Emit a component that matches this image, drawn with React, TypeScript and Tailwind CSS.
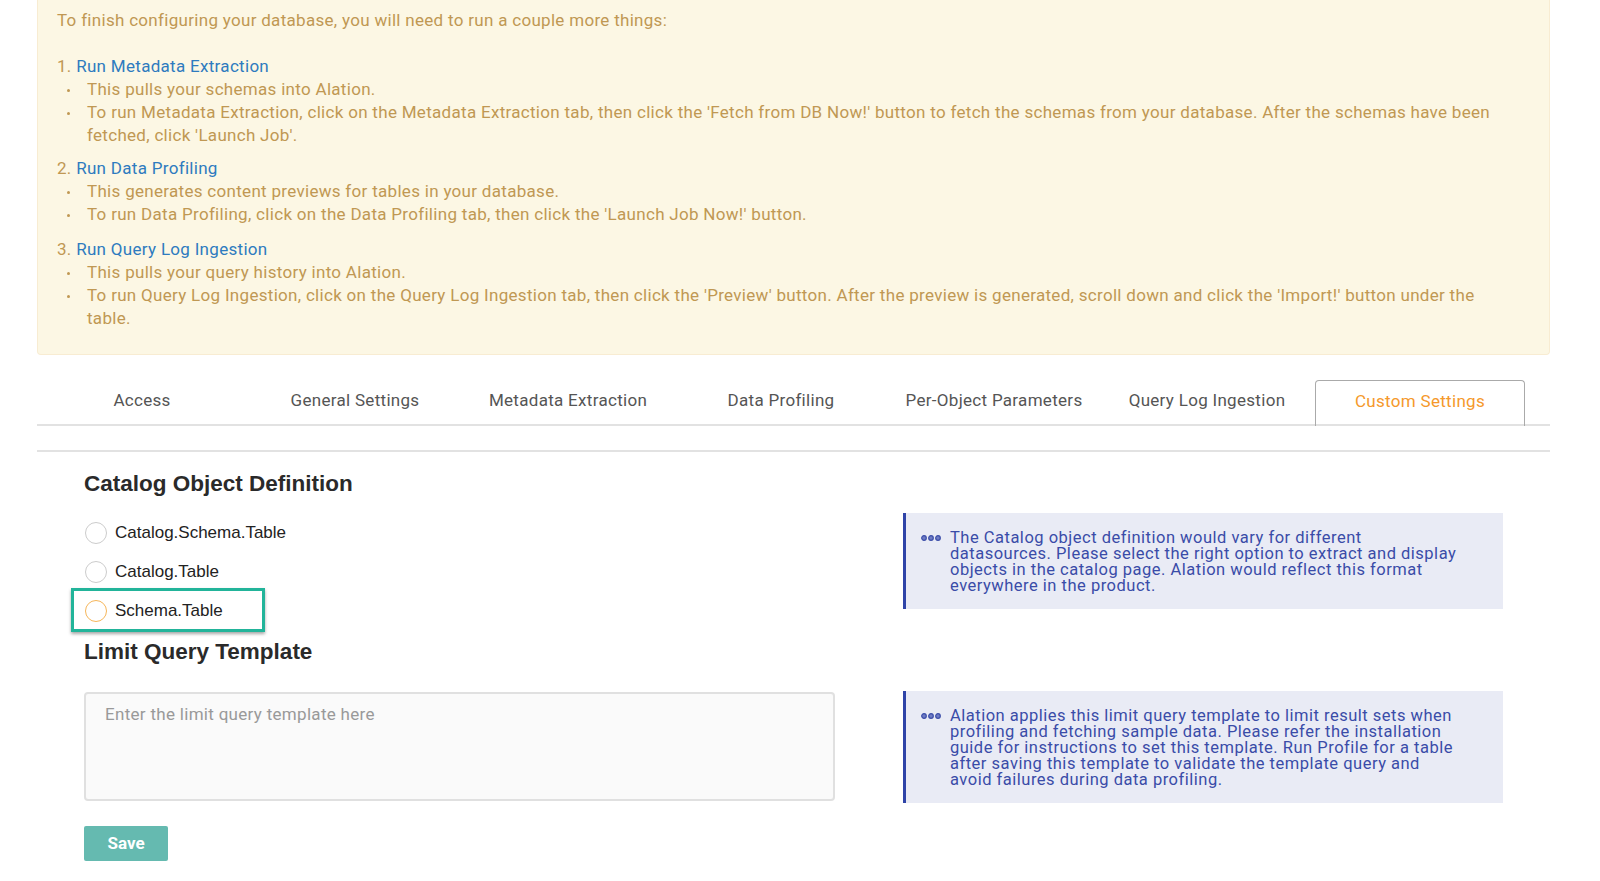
import { useState } from "react";

const tabs = [
  "Access",
  "General Settings",
  "Metadata Extraction",
  "Data Profiling",
  "Per-Object Parameters",
  "Query Log Ingestion",
  "Custom Settings",
];

const steps = [
  {
    title: "Run Metadata Extraction",
    bullets: [
      "This pulls your schemas into Alation.",
      "To run Metadata Extraction, click on the Metadata Extraction tab, then click the 'Fetch from DB Now!' button to fetch the schemas from your database. After the schemas have been fetched, click 'Launch Job'.",
    ],
  },
  {
    title: "Run Data Profiling",
    bullets: [
      "This generates content previews for tables in your database.",
      "To run Data Profiling, click on the Data Profiling tab, then click the 'Launch Job Now!' button.",
    ],
  },
  {
    title: "Run Query Log Ingestion",
    bullets: [
      "This pulls your query history into Alation.",
      "To run Query Log Ingestion, click on the Query Log Ingestion tab, then click the 'Preview' button. After the preview is generated, scroll down and click the 'Import!' button under the table.",
    ],
  },
];

const options = ["Catalog.Schema.Table", "Catalog.Table", "Schema.Table"];

const catalogHelp = [
  "The Catalog object definition would vary for different",
  "datasources. Please select the right option to extract and display",
  "objects in the catalog page. Alation would reflect this format",
  "everywhere in the product.",
];

const limitHelp = [
  "Alation applies this limit query template to limit result sets when",
  "profiling and fetching sample data. Please refer the installation",
  "guide for instructions to set this template. Run Profile for a table",
  "after saving this template to validate the template query and",
  "avoid failures during data profiling.",
];

export default function App() {
  const [selected] = useState("Schema.Table");

  return (
    <div className="h-[881px] w-[1600px] overflow-hidden bg-white font-['Roboto',sans-serif] tracking-[0.3px]">
      <div className="ml-[37px] w-[1513px] rounded-b-[4px] border border-t-0 border-[#f8ecd2] bg-[#fcf7e4] pb-[24px] pl-[19px] pr-[39px] pt-[9px] text-[17px] leading-[23px] text-[#c09853]">
        <div>To finish configuring your database, you will need to run a couple more things:</div>
        <div className="h-[23px]" />
        {steps.map((step, i) => (
          <div key={step.title} className={i === 1 ? "mt-[10px]" : i === 2 ? "mt-[12px]" : ""}>
            <div>
              {i + 1}. <span className="text-[#2e7bbf]">{step.title}</span>
            </div>
            {step.bullets.map((b) => (
              <div key={b} className="flex">
                <div className="flex w-[30px] shrink-0 items-start pl-[10px] pt-[11px]">
                  <span className="h-[3px] w-[3px] rounded-full bg-[#c09853]" />
                </div>
                <div>{b}</div>
              </div>
            ))}
          </div>
        ))}
      </div>

      <div className="ml-[37px] mt-[25px] w-[1513px]">
        <div className="flex gap-[3px] border-b-2 border-[#e2e2e2]">
          {tabs.map((t) => {
            const active = t === "Custom Settings";
            return (
              <div
                key={t}
                className={`-mb-[2px] flex h-[46px] w-[210px] items-center justify-center pb-[4px] text-[17px] ${
                  active
                    ? "rounded-t-[4px] border border-b-0 border-[#aaaaaa] text-[#f5992b]"
                    : "text-[#555555]"
                }`}
              >
                {t}
              </div>
            );
          })}
        </div>
        <div className="mt-[24px] h-[2px] bg-[#e2e2e2]" />
      </div>

      <div className="flex pl-[84px]">
        <div className="w-[751px]">
          <h2 className="mt-[18px] font-['Liberation_Sans',Arial,sans-serif] text-[22.5px] font-bold leading-[28px] tracking-normal text-[#2a2a2a]">
            Catalog Object Definition
          </h2>
          <div className="mt-[15px] flex flex-col">
            {options.map((o) => {
              const isSel = o === selected;
              const row = (
                <div className="flex h-[39px] items-center gap-[8px] pl-[1px]">
                  <span
                    className={`h-[22px] w-[22px] rounded-full border-[1.5px] ${
                      isSel ? "border-[#f6b65a]" : "border-[#cccccc]"
                    }`}
                  />
                  <span className="font-['Liberation_Sans',Arial,sans-serif] text-[17px] tracking-normal text-[#222222]">
                    {o}
                  </span>
                </div>
              );
              return isSel ? (
                <div key={o} className="relative">
                  {row}
                  <div className="pointer-events-none absolute left-[-13px] top-[-3px] h-[44px] w-[194px] border-[3px] border-[#22b49a] shadow-[0_2px_3px_rgba(0,0,0,0.35)]" />
                </div>
              ) : (
                <div key={o}>{row}</div>
              );
            })}
          </div>
          <h2 className="mt-[8px] font-['Liberation_Sans',Arial,sans-serif] text-[22.5px] font-bold leading-[28px] tracking-normal text-[#2a2a2a]">
            Limit Query Template
          </h2>
          <div className="mt-[26px] h-[109px] rounded-[4px] border-2 border-[#e0e0e0] bg-[#fafafa] px-[19px] pt-[8px] text-[17px] text-[#999999]">
            Enter the limit query template here
          </div>
          <button className="mt-[25px] h-[35px] w-[84px] rounded-[2px] bg-[#65bab0] text-[17px] font-bold tracking-normal text-white">
            Save
          </button>
        </div>

        <div className="ml-[68px] w-[600px]">
          <InfoBox className="mt-[61px]" lines={catalogHelp} />
          <InfoBox className="mt-[82px]" lines={limitHelp} />
        </div>
      </div>
    </div>
  );
}

function InfoBox({ lines, className }: { lines: string[]; className?: string }) {
  return (
    <div className={`flex border-l-[3px] border-[#2f44a8] bg-[#e9ebf5] pb-[15px] pl-[15px] pr-[20px] pt-[17px] ${className ?? ""}`}>
      <svg width="20" height="8" viewBox="0 0 20 8" className="mt-[4px] shrink-0">
        <circle cx="3" cy="4" r="2.3" fill="#6f7cc4" stroke="#3a4ca8" strokeWidth="1.2" />
        <circle cx="10" cy="4" r="2.3" fill="#6f7cc4" stroke="#3a4ca8" strokeWidth="1.2" />
        <circle cx="17" cy="4" r="2.3" fill="#6f7cc4" stroke="#3a4ca8" strokeWidth="1.2" />
      </svg>
      <div className="ml-[9px] text-[16.5px] leading-[16px] tracking-[0.5px] text-[#3a4ca8]">
        {lines.map((l) => (
          <div key={l} className="whitespace-nowrap">
            {l}
          </div>
        ))}
      </div>
    </div>
  );
}
